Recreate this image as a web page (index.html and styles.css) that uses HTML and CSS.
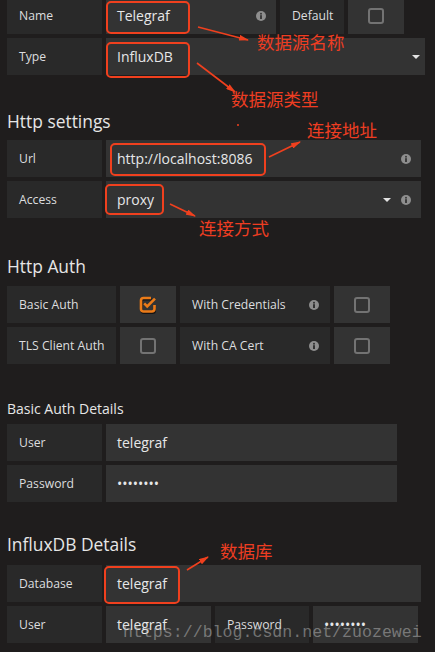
FILE: index.html
```html
<!DOCTYPE html>
<html lang="zh-CN">
<head>
    <meta charset="UTF-8">
    <meta name="viewport" content="width=device-width, initial-scale=1.0">
    <title>Data Sources / InfluxDB</title>
    <link rel="stylesheet" href="styles.css">
</head>
<body>
    <!-- 基本信息 -->
    <div class="page">
        <div class="group first">
            <div class="row">
                <span class="label w-95">Name</span>
                <span class="field w-name">Telegraf
                    <svg class="help" viewBox="0 0 10 10"><circle cx="5" cy="5" r="5"/><rect x="4.1" y="4.2" width="1.8" height="3.8"/><circle cx="5" cy="2.7" r="0.95"/></svg>
                </span>
                <span class="label w-default">Default</span>
                <span class="field check-cell"><span class="box"></span></span>
            </div>
            <div class="row">
                <span class="label w-95">Type</span>
                <span class="field w-type">InfluxDB <span class="caret"></span></span>
            </div>
        </div>

        <!-- Http settings -->
        <h3 class="title title-http">Http settings</h3>
        <div class="group">
            <div class="row">
                <span class="label w-95">Url</span>
                <span class="field w-url">http://localhost:8086
                    <svg class="help" viewBox="0 0 10 10"><circle cx="5" cy="5" r="5"/><rect x="4.1" y="4.2" width="1.8" height="3.8"/><circle cx="5" cy="2.7" r="0.95"/></svg>
                </span>
            </div>
            <div class="row">
                <span class="label w-95">Access</span>
                <span class="field w-url">proxy <span class="caret"></span>
                    <svg class="help near" viewBox="0 0 10 10"><circle cx="5" cy="5" r="5"/><rect x="4.1" y="4.2" width="1.8" height="3.8"/><circle cx="5" cy="2.7" r="0.95"/></svg>
                </span>
            </div>
        </div>

        <!-- Http Auth -->
        <h3 class="title title-auth">Http Auth</h3>
        <div class="group">
            <div class="row">
                <span class="label w-auth">Basic Auth</span>
                <span class="field check-cell">
                    <svg class="checked" viewBox="0 0 18 18">
                        <path class="checked-shadow" d="M12.5 3.5H5a2.5 2.5 0 0 0-2.5 2.5v8.5A2.5 2.5 0 0 0 5 17h8.5a2.5 2.5 0 0 0 2.5-2.5v-4"/>
                        <path d="M12 2H4.5A2.5 2.5 0 0 0 2 4.5V13a2.5 2.5 0 0 0 2.5 2.5H13a2.5 2.5 0 0 0 2.5-2.5V9"/>
                        <path d="M5.2 7.4l3 3L16 2.6"/>
                    </svg>
                </span>
                <span class="label w-cred">With Credentials
                    <svg class="help dim" viewBox="0 0 10 10"><circle cx="5" cy="5" r="5"/><rect x="4.1" y="4.2" width="1.8" height="3.8"/><circle cx="5" cy="2.7" r="0.95"/></svg>
                </span>
                <span class="field check-cell"><span class="box"></span></span>
            </div>
            <div class="row">
                <span class="label w-auth">TLS Client Auth</span>
                <span class="field check-cell"><span class="box"></span></span>
                <span class="label w-cred">With CA Cert
                    <svg class="help dim" viewBox="0 0 10 10"><circle cx="5" cy="5" r="5"/><rect x="4.1" y="4.2" width="1.8" height="3.8"/><circle cx="5" cy="2.7" r="0.95"/></svg>
                </span>
                <span class="field check-cell"><span class="box"></span></span>
            </div>
        </div>

        <!-- Basic Auth Details -->
        <h3 class="title small title-basic">Basic Auth Details</h3>
        <div class="group">
            <div class="row">
                <span class="label w-95">User</span>
                <span class="field w-basic">telegraf</span>
            </div>
            <div class="row">
                <span class="label w-95">Password</span>
                <span class="field w-basic">&bull;&bull;&bull;&bull;&bull;&bull;&bull;&bull;</span>
            </div>
        </div>

        <!-- InfluxDB Details -->
        <h3 class="title title-influx">InfluxDB Details</h3>
        <div class="group">
            <div class="row">
                <span class="label w-95">Database</span>
                <span class="field w-url">telegraf</span>
            </div>
            <div class="row">
                <span class="label w-95">User</span>
                <span class="field w-half">telegraf</span>
                <span class="label w-pass">Password</span>
                <span class="field w-half">&bull;&bull;&bull;&bull;&bull;&bull;&bull;&bull;</span>
            </div>
        </div>
    </div>

    <!-- 标注 -->
    <svg class="notes" viewBox="0 0 435 652">
        <defs>
            <marker id="head" viewBox="0 0 10 6" refX="9" refY="3" markerWidth="10" markerHeight="6" markerUnits="userSpaceOnUse" orient="auto">
                <path d="M0 0L10 3L0 6z" fill="#f0401e"/>
            </marker>
        </defs>
        <g class="frames">
            <rect x="107" y="2" width="82" height="31" rx="4"/>
            <rect x="107" y="43" width="82" height="34" rx="4"/>
            <rect x="111" y="144" width="154" height="31" rx="4"/>
            <rect x="106" y="185" width="57" height="29" rx="4"/>
            <rect x="105" y="567" width="74" height="36" rx="4"/>
        </g>
        <g class="arrows">
            <line x1="198" y1="27" x2="248" y2="40" marker-end="url(#head)"/>
            <line x1="197" y1="63" x2="235" y2="92" marker-end="url(#head)"/>
            <line x1="269" y1="157" x2="300" y2="142" marker-end="url(#head)"/>
            <line x1="170" y1="204" x2="195" y2="216" marker-end="url(#head)"/>
            <line x1="187" y1="570" x2="208" y2="557" marker-end="url(#head)"/>
        </g>
        <circle cx="238" cy="125" r="1" fill="#f0401e"/>
        <g class="note-text">
            <text x="257" y="49">数据源名称</text>
            <text x="231" y="105.5">数据源类型</text>
            <text x="307" y="137">连接地址</text>
            <text x="199" y="235">连接方式</text>
            <text x="220" y="558">数据库</text>
        </g>
        <text class="mark" x="123" y="637">https://blog.csdn.net/zuozewei</text>
    </svg>
</body>
</html>
```

FILE: styles.css
```css
/* Halaman gelap */
body {
    margin: 0;
    width: 435px;
    height: 652px;
    overflow: hidden;
    position: relative;
    background: #1f1d1d;
    color: #dcdddf;
    font-family: 'Open Sans', 'Noto Sans', sans-serif;
}

.page {
    padding-left: 7px;
}

.group {
    display: flex;
    flex-direction: column;
    gap: 4px;
}

.group.first {
    margin-top: -3px;
}

.row {
    display: flex;
    gap: 4px;
    height: 37px;
}

/* Label dan input */
.label,
.field {
    display: flex;
    align-items: center;
    box-sizing: border-box;
    flex: none;
    white-space: nowrap;
    font-weight: 500;
}

.label {
    background: #292929;
    font-size: 12.2px;
    padding: 0 11px 0 12px;
}

.field {
    background: #333333;
    font-size: 14px;
    padding: 0 10px 0 11px;
    color: #e6e7e8;
}

.w-95 { width: 95px; }
.w-name { width: 170px; }
.w-default { width: 64px; }
.w-type { width: 319px; padding-right: 5px; }
.w-url { width: 315px; }
.w-auth { width: 109px; }
.w-cred { width: 150px; }
.w-basic { width: 291px; }
.w-half { width: 105px; }
.w-pass { width: 94px; }

.check-cell {
    width: 56px;
    justify-content: center;
    padding: 0;
}

.box {
    width: 16px;
    height: 16px;
    box-sizing: border-box;
    border: 2px solid #737373;
    border-radius: 3px;
}

.checked {
    width: 18px;
    height: 18px;
    margin-left: -1px;
    fill: none;
    stroke: #eb7b18;
    stroke-width: 2.6;
}

.checked .checked-shadow {
    stroke: #151313;
    stroke-width: 2;
}

/* Ikon info */
.help {
    width: 10px;
    height: 10px;
    margin-left: auto;
    flex: none;
    fill: #8e8e8e;
}

.help rect,
.help circle + rect + circle {
    fill: #333333;
}

.help.dim rect,
.help.dim circle + rect + circle {
    fill: #292929;
}

.help.near {
    margin-left: 10px;
}

.caret {
    width: 0;
    height: 0;
    margin-left: auto;
    border-left: 4px solid transparent;
    border-right: 4px solid transparent;
    border-top: 4px solid #e3e3e3;
}

/* Judul bagian */
.title {
    margin: 0;
    font-weight: 500;
    font-size: 17.4px;
    line-height: 20px;
    color: #e6e6e6;
}

.title.small {
    font-size: 14px;
    line-height: 16px;
}

.title-http { margin: 36px 0 9px; }
.title-auth { margin: 38px 0 10px; }
.title-basic { margin: 37px 0 7px; }
.title-influx { margin: 32px 0 11px; }

/* Lapisan catatan merah */
.notes {
    position: absolute;
    top: 0;
    left: 0;
    width: 435px;
    height: 652px;
    pointer-events: none;
}

.frames rect {
    fill: none;
    stroke: #f0401e;
    stroke-width: 2;
}

.arrows line {
    stroke: #f0401e;
    stroke-width: 1.6;
}

.note-text text {
    font-family: 'Noto Sans CJK SC', sans-serif;
    font-size: 17.5px;
    fill: #ee3d22;
}

.mark {
    font-family: 'Liberation Mono', monospace;
    font-size: 16.6px;
    fill: rgba(190, 190, 190, 0.5);
}
```
